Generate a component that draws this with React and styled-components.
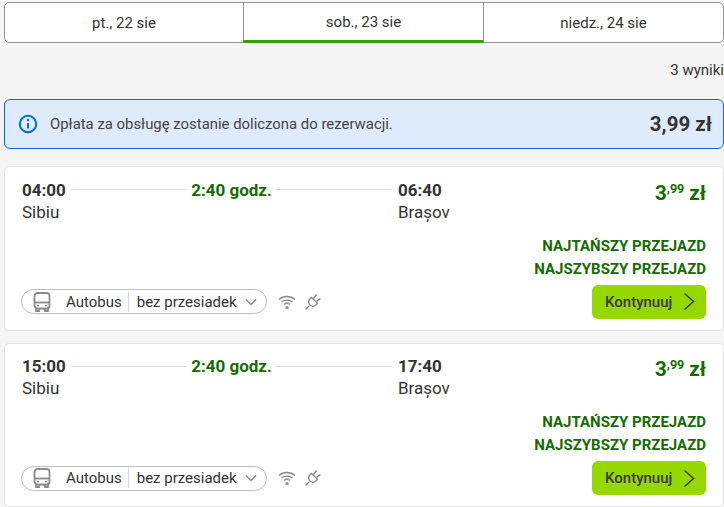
import React from "react";
import styled, { createGlobalStyle } from "styled-components";

const GlobalStyle = createGlobalStyle`
  html, body {
    margin: 0;
    height: 100%;
    overflow: hidden;
    background: #f5f5f5;
    font-family: Roboto, "Liberation Sans", sans-serif;
    color: #333;
  }
`;

const Page = styled.div`
  height: 507px;
  overflow: hidden;
  padding: 2px 0 0 4px;
  box-sizing: border-box;
`;

const Tabs = styled.div`
  display: grid;
  grid-template-columns: 238px 240px 1fr;
  height: 41px;
  box-sizing: border-box;
  background: #fff;
  border: 1px solid #939393;
  border-radius: 5px;
`;

const Tab = styled.div`
  display: flex;
  align-items: center;
  justify-content: center;
  font-size: 15px;
  color: #333;
  margin-bottom: ${(p) => (p.$active ? "-1px" : "0")};
  border-left: ${(p) => (p.$first ? "0" : "1px solid #939393")};
  border-bottom: ${(p) => (p.$active ? "3px solid #37a000" : "0")};
`;

const Results = styled.div`
  height: 56px;
  padding-top: 19px;
  box-sizing: border-box;
  text-align: right;
  font-size: 15px;
  line-height: 17px;
`;

const Notice = styled.div`
  display: flex;
  align-items: center;
  height: 50px;
  box-sizing: border-box;
  padding: 0 11px 0 13px;
  background: #deebfb;
  border: 1px solid #0b6bd8;
  border-radius: 6px;
`;

const NoticeText = styled.div`
  flex: 1;
  margin-left: 12px;
  font-size: 14.9px;
  color: #444;
`;

const NoticePrice = styled.div`
  font-size: 20.5px;
  font-weight: 700;
  color: #333;
`;

const List = styled.div`
  display: flex;
  flex-direction: column;
  gap: 12px;
  margin-top: 17px;
`;

const Card = styled.div`
  flex: none;
  height: 164.5px;
  box-sizing: border-box;
  padding: 11.8px 17px 11px 17px;
  background: #fff;
  border: 1px solid #e3e3e3;
  border-radius: 5px;
  display: flex;
  flex-direction: column;
`;

const TopRow = styled.div`
  display: flex;
  justify-content: space-between;
  align-items: flex-start;
`;

const Route = styled.div`
  display: grid;
  grid-template-columns: 49px 321px auto;
  grid-template-rows: 22px 22px;
  align-items: center;
`;

const Time = styled.div`
  font-size: 17px;
  font-weight: 700;
  color: #333;
  padding-left: ${(p) => (p.$end ? "6px" : "0")};
`;

const Place = styled.div`
  font-size: 17px;
  color: #333;
  padding-left: ${(p) => (p.$end ? "6px" : "0")};
`;

const Duration = styled.div`
  display: flex;
  align-items: center;
  gap: 4px;
  font-size: 17px;
  font-weight: 700;
  color: #156b00;
  white-space: nowrap;
`;

const Line = styled.span`
  flex: 1;
  height: 1px;
  background: #dedede;
`;

const Price = styled.div`
  font-size: 20.5px;
  font-weight: 700;
  color: #156b00;
  line-height: 24px;
  padding-top: 2px;
`;

const Cents = styled.sup`
  font-size: 12.5px;
  font-weight: 700;
  vertical-align: 7px;
  line-height: 0;
  margin-right: 5px;
`;

const Labels = styled.div`
  margin-top: 12px;
  text-align: right;
  font-size: 15px;
  font-weight: 700;
  line-height: 23px;
  color: #156b00;
`;

const BottomRow = styled.div`
  display: flex;
  justify-content: space-between;
  align-items: center;
  margin-top: 4px;
`;

const Features = styled.div`
  display: flex;
  align-items: center;
  margin-left: -1px;
`;

const Pill = styled.div`
  display: flex;
  align-items: center;
  height: 25px;
  width: 246px;
  box-sizing: border-box;
  padding-left: 11px;
  border: 1px solid #bdbdbd;
  border-radius: 13px;
  font-size: 15px;
  color: #333;
`;

const PillMode = styled.span`
  margin-left: 15px;
  padding-right: 6px;
  line-height: 20px;
  border-right: 1px solid #d8d8d8;
`;

const PillStops = styled.span`
  margin-left: 8px;
`;

const PillChevron = styled.span`
  display: flex;
  margin-left: 8px;
`;

const Amenities = styled.div`
  display: flex;
  align-items: center;
  gap: 8px;
  margin-left: 11px;
  color: #8a8a8a;
`;

const Button = styled.div`
  display: flex;
  align-items: center;
  justify-content: space-between;
  width: 114px;
  height: 34px;
  box-sizing: border-box;
  padding: 0 11px 0 13px;
  background: #97d700;
  border-radius: 6px;
  font-size: 15px;
  font-weight: 500;
  color: #3a3a3a;
`;

const InfoIcon = () => (
  <svg width="20" height="20" viewBox="0 0 20 20" fill="none" stroke="#0b6bd8" strokeWidth="2">
    <circle cx="10" cy="10" r="8.2" />
    <path d="M10 9v5.5" />
    <circle cx="10" cy="6" r="1.2" fill="#0b6bd8" stroke="none" />
  </svg>
);

const BusIcon = () => (
  <svg width="18" height="20" viewBox="0 0 18 20" fill="none" stroke="#8a8a8a" strokeWidth="1.8">
    <rect x="1.5" y="1" width="15" height="15.5" rx="3" />
    <path d="M1.5 10.5h15" />
    <path d="M3 16.5v2.5h3v-2.5M12 16.5v2.5h3v-2.5" />
    <circle cx="5" cy="13.5" r="1" fill="#8a8a8a" stroke="none" />
    <circle cx="13" cy="13.5" r="1" fill="#8a8a8a" stroke="none" />
  </svg>
);

const Chevron = () => (
  <svg width="12" height="8" viewBox="0 0 12 8" fill="none" stroke="#8a8a8a" strokeWidth="1.4">
    <path d="M1 1.5l5 5 5-5" />
  </svg>
);

const WifiIcon = () => (
  <svg width="18" height="16" viewBox="0 0 18 16" fill="none" stroke="#8a8a8a" strokeWidth="1.3">
    <path d="M1 5.5c4.5-4 11.5-4 16 0" />
    <path d="M3.5 8c3-2.6 8-2.6 11 0" />
    <path d="M6 10.5c1.7-1.4 4.3-1.4 6 0" />
    <circle cx="9" cy="13.5" r="1.6" fill="#8a8a8a" stroke="none" />
  </svg>
);

const PlugIcon = () => (
  <svg width="18" height="18" viewBox="0 0 18 18" fill="none" stroke="#8a8a8a" strokeWidth="1.4">
    <path d="M1.5 16.5l3.5-3.5" />
    <path d="M7.5 4.5l6 6-1.6 1.6c-1.7 1.7-4.3 1.7-6 0s-1.7-4.3 0-6z" />
    <path d="M9.5 5.5l3-4M12.5 8.5l4-3" />
  </svg>
);

const ArrowIcon = () => (
  <svg width="12" height="19" viewBox="0 0 12 19" fill="none" stroke="#3a3a3a" strokeWidth="1.5">
    <path d="M1.5 1.5l9 8-9 8" />
  </svg>
);

const trips = [
  { from: "04:00", to: "06:40" },
  { from: "15:00", to: "17:40" },
];

const App = () => (
  <Page>
    <GlobalStyle />
    <Tabs>
      <Tab $first>pt., 22 sie</Tab>
      <Tab $active>sob., 23 sie</Tab>
      <Tab>niedz., 24 sie</Tab>
    </Tabs>
    <Results>3 wyniki</Results>
    <Notice>
      <InfoIcon />
      <NoticeText>Opłata za obsługę zostanie doliczona do rezerwacji.</NoticeText>
      <NoticePrice>3,99 zł</NoticePrice>
    </Notice>
    <List>
      {trips.map((trip) => (
        <Card key={trip.from}>
          <TopRow>
            <Route>
              <Time>{trip.from}</Time>
              <Duration>
                <Line />
                2:40 godz.
                <Line />
              </Duration>
              <Time $end>{trip.to}</Time>
              <Place>Sibiu</Place>
              <span />
              <Place $end>Brașov</Place>
            </Route>
            <Price>
              3<Cents>,99</Cents>zł
            </Price>
          </TopRow>
          <Labels>
            NAJTAŃSZY PRZEJAZD
            <br />
            NAJSZYBSZY PRZEJAZD
          </Labels>
          <BottomRow>
            <Features>
              <Pill>
                <BusIcon />
                <PillMode>Autobus</PillMode>
                <PillStops>bez przesiadek</PillStops>
                <PillChevron>
                  <Chevron />
                </PillChevron>
              </Pill>
              <Amenities>
                <WifiIcon />
                <PlugIcon />
              </Amenities>
            </Features>
            <Button>
              Kontynuuj
              <ArrowIcon />
            </Button>
          </BottomRow>
        </Card>
      ))}
    </List>
  </Page>
);

export default App;
